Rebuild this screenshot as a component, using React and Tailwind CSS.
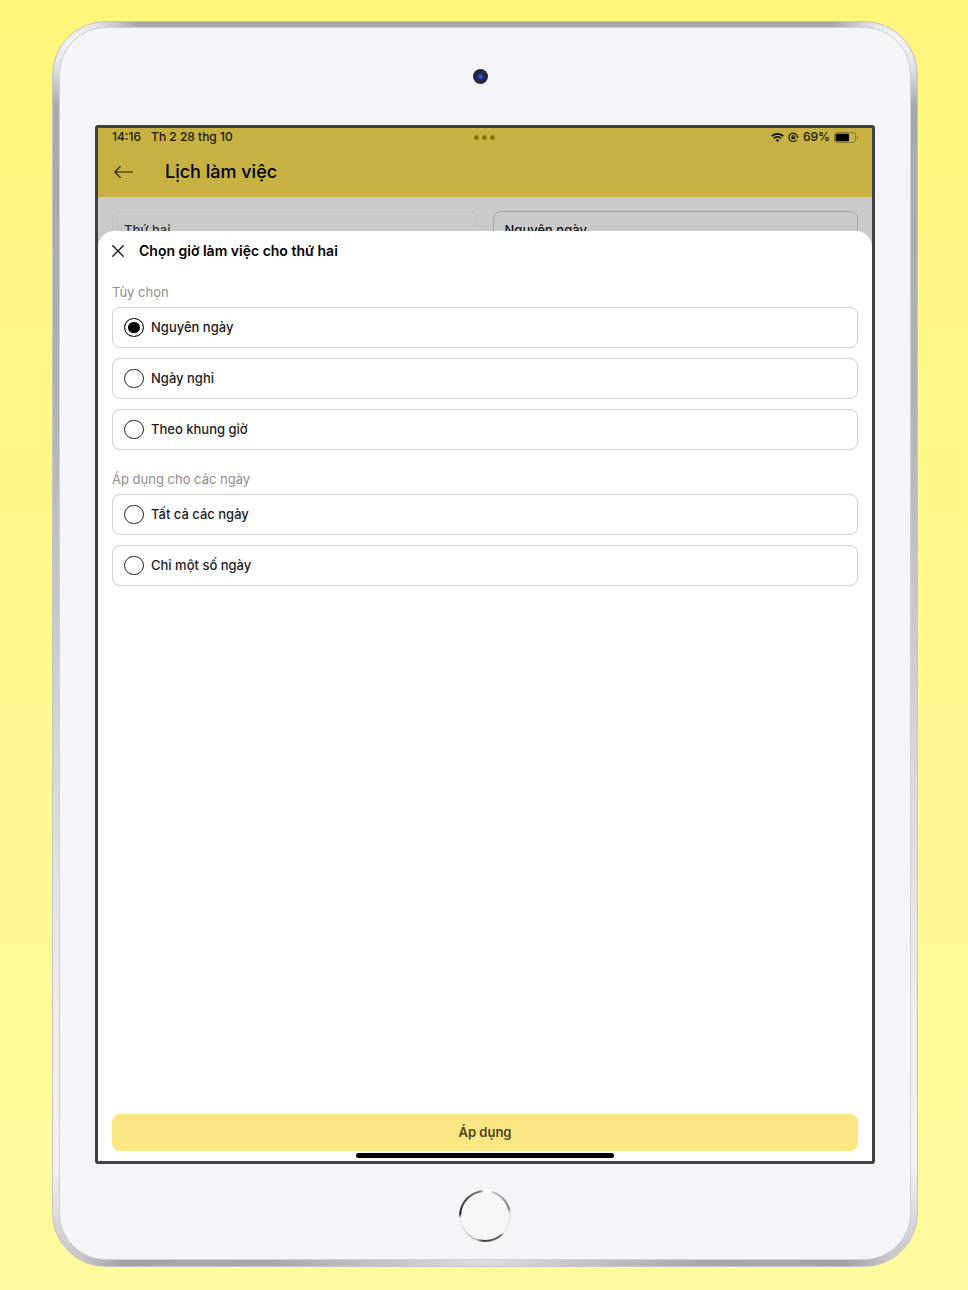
import React, { useState } from "react";

function StatusBar() {
  return (
    <div className="grid h-[18px] grid-cols-3 items-center px-[14px] text-[12px] leading-[18px] font-medium text-[#1c1904]">
      <div className="flex gap-[10px]">
        <span>14:16</span>
        <span>Th 2 28 thg 10</span>
      </div>
      <div className="flex justify-center gap-[3px]">
        <i className="size-[5px] rounded-full bg-[#8a7404]" />
        <i className="size-[5px] rounded-full bg-[#8a7404]" />
        <i className="size-[5px] rounded-full bg-[#8a7404]" />
      </div>
      <div className="flex items-center justify-end gap-1">
        <svg width="13" height="9" viewBox="0 0 13 9" fill="none" stroke="#0c0b02" strokeWidth="1.7" aria-hidden="true">
          <path d="M0.7 3.2a8.3 8.3 0 0 1 11.6 0" />
          <path d="M2.9 5.4a5.2 5.2 0 0 1 7.2 0" />
          <path d="M6.5 8.9 4.7 7.2a2.6 2.6 0 0 1 3.6 0z" fill="#0c0b02" stroke="none" />
        </svg>
        <svg width="11" height="10" viewBox="0 0 11 10" fill="none" stroke="#1c1904" strokeWidth="1.2" aria-hidden="true">
          <path d="M8.6 7.6A4.2 4.2 0 1 1 9.2 4.6" />
          <path d="M7.9 4.3h2.8L9.3 6.3z" fill="#1c1904" stroke="none" />
          <rect x="3.4" y="4.6" width="3.6" height="2.6" rx="0.4" fill="#1c1904" stroke="none" />
          <path d="M4.1 4.8v-.9a1.1 1.1 0 0 1 2.2 0v.9" strokeWidth="0.8" />
        </svg>
        <span>69%</span>
        <svg width="24" height="11" viewBox="0 0 24 11" aria-hidden="true">
          <rect x="0.5" y="0.5" width="21" height="10" rx="2.6" fill="none" stroke="#8b7a28" />
          <rect x="1.6" y="1.8" width="13.4" height="7.4" rx="1.2" fill="#000" />
          <path d="M22.8 3.6c1.5.5 1.5 3.3 0 3.8z" fill="#8b7a28" />
        </svg>
      </div>
    </div>
  );
}

function OptionGroup({ legend, name, options, value, onChange }) {
  return (
    <fieldset>
      <legend className="mb-[5px] text-[13px] leading-[20px] text-[#8e8e8e]">{legend}</legend>
      <div className="flex flex-col gap-[10px]">
        {options.map((o) => (
          <label
            key={o}
            className="flex h-[41px] items-center gap-[7px] rounded-lg border border-[#cfcfcf] px-[11px] text-[13px] font-medium text-[#1c1c1c]"
          >
            <input
              type="radio"
              name={name}
              checked={value === o}
              onChange={() => onChange(o)}
              className="h-[19px] w-[20px] shrink-0 appearance-none rounded-full border border-[#222] bg-white shadow-[inset_0_0_0_3px_white] checked:bg-black"
            />
            {o}
          </label>
        ))}
      </div>
    </fieldset>
  );
}

function Sheet() {
  const [mode, setMode] = useState("Nguyên ngày");
  const [days, setDays] = useState("");
  return (
    <section className="relative -mt-4 flex flex-1 flex-col rounded-t-2xl bg-white px-[14px] text-black">
      <div className="flex h-[39px] items-center gap-[15px]">
        <button type="button" aria-label="Đóng">
          <svg width="12" height="12" viewBox="0 0 12 12" stroke="#111" strokeWidth="1.3" strokeLinecap="round" aria-hidden="true">
            <path d="M0.8 0.8l10.4 10.4M11.2 0.8L0.8 11.2" />
          </svg>
        </button>
        <h2 className="text-[14px] font-semibold">Chọn giờ làm việc cho thứ hai</h2>
      </div>
      <div className="mt-3 flex flex-1 flex-col gap-[19px]">
        <OptionGroup
          legend="Tùy chọn"
          name="mode"
          options={["Nguyên ngày", "Ngày nghỉ", "Theo khung giờ"]}
          value={mode}
          onChange={setMode}
        />
        <OptionGroup
          legend="Áp dụng cho các ngày"
          name="days"
          options={["Tất cả các ngày", "Chỉ một số ngày"]}
          value={days}
          onChange={setDays}
        />
      </div>
      <button type="button" className="h-[37px] rounded-lg bg-[#fae784] text-[13px] font-semibold text-[#4b4420]">
        Áp dụng
      </button>
      <div className="mx-auto mt-[2px] mb-[3px] h-[5px] w-[258px] rounded-full bg-black" />
    </section>
  );
}

function Screen() {
  return (
    <div className="flex flex-1 flex-col overflow-hidden rounded-[3px] border-3 border-[#3f4042] bg-[#cbcbcb]">
      <header className="bg-[#c6b142]">
        <StatusBar />
        <div className="flex h-[51px] items-center gap-[32px] px-[16px] text-black">
          <button type="button" aria-label="Quay lại">
            <svg width="19" height="12" viewBox="0 0 19 12" fill="none" stroke="#1c1904" strokeWidth="1.1" strokeLinecap="round" strokeLinejoin="round" aria-hidden="true">
              <path d="M18.4 6H0.8M6.2 0.6L0.8 6l5.4 5.4" />
            </svg>
          </button>
          <h1 className="text-[18px] font-medium">Lịch làm việc</h1>
        </div>
      </header>
      <div className="grid h-[50px] grid-cols-2 gap-[15px] overflow-hidden px-[14px] pt-[14px] text-[13px] font-medium">
        <div className="flex h-[40px] items-center rounded-lg border border-[#c3c3c3] bg-[#c9c9c9] px-[11px] text-[#333]">Thứ hai</div>
        <div className="flex h-[40px] items-center rounded-lg border border-[#a3a3a3] px-[11px] text-[#151515]">Nguyên ngày</div>
      </div>
      <Sheet />
    </div>
  );
}

export default function App() {
  return (
    <main className="flex min-h-screen flex-col bg-linear-to-b from-[#fff67c] to-[#fffa9f] pt-[21px] pr-[50px] pb-[23px] pl-[52px] font-['Inter','Noto_Sans',sans-serif]">
      <div className="flex flex-1 flex-col rounded-[54px] border border-[#c4c4c4] bg-[radial-gradient(circle_at_16px_16px,#f4f4f4_0,#e4e4e6_30px,transparent_70px),radial-gradient(circle_at_calc(100%-16px)_16px,#f4f4f4_0,#e4e4e6_30px,transparent_70px),linear-gradient(90deg,#c8c8ca_3%,#a4a4a6_8%,#a8a8aa_25%,#dcdce0_50%,#a8a8aa_75%,#a4a4a6_92%,#c8c8ca_97%),linear-gradient(#a5a6a9,#b0b1b4_30%,#d2d2d6_55%,#eeeef1_80%,#f1f1f4_92%,#c4c4c8)] bg-[size:100%_100%,100%_100%,100%_12px,100%_100%] bg-bottom bg-no-repeat px-[6px] pt-[5px] pb-[6px]">
        <div className="flex flex-1 flex-col rounded-[47px] border border-[#d0d0d4] bg-[#f4f5f8] px-[35px]">
          <div className="flex h-[97px] items-center justify-center">
            <div className="mr-[9px] size-[15px] rounded-full bg-[radial-gradient(circle,#4a68c8_0,#1c2c80_30%,#26293a_48%,#24262b_70%)]" />
          </div>
          <Screen />
          <div className="flex h-[95px] items-center justify-center pt-[9px]">
            <div className="size-[52px] rounded-full bg-[conic-gradient(#fff_0deg,#fff_12deg,#b9b9bb_20deg,#77777a_72deg,#e6e6e8_84deg,#eee_132deg,#666_143deg,#444_185deg,#bbb_200deg,#ddd_230deg,#eee_265deg,#222_275deg,#444_310deg,#777_350deg,#fff_358deg)] p-[2px]">
              <div className="size-full rounded-full bg-[#f6f6f9]" />
            </div>
          </div>
        </div>
      </div>
    </main>
  );
}
